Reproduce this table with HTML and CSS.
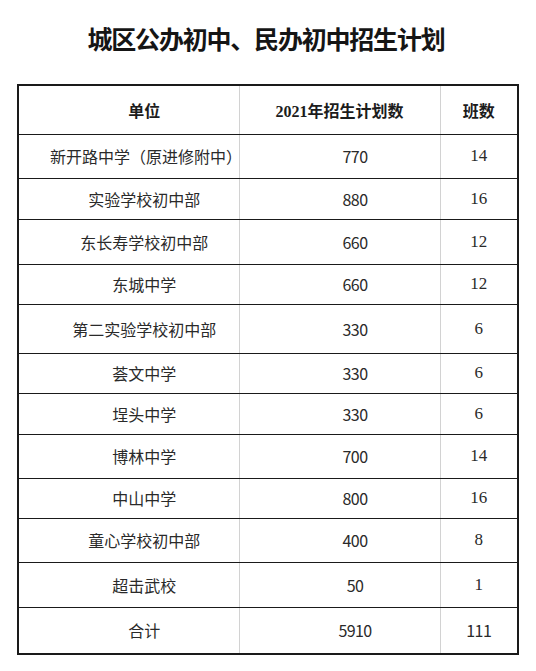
FILE: index.html
```html
<!DOCTYPE html>
<html lang="zh-CN">
<head>
<meta charset="utf-8">
<title>城区公办初中、民办初中招生计划</title>
<link rel="stylesheet" href="styles.css">
</head>
<body>
<div class="page">
  <h1 class="title">城区公办初中、民办初中招生计划</h1>
  <table class="plan">
    <colgroup>
      <col class="c-unit">
      <col class="c-num">
      <col class="c-cls">
    </colgroup>
    <thead>
      <tr class="h49">
        <th class="unit">单位</th>
        <th class="num-head">2021年招生计划数</th>
        <th class="cls">班数</th>
      </tr>
    </thead>
    <tbody>
      <tr class="h44"><td class="unit">新开路中学（原进修附中）</td><td class="num">770</td><td class="cls">14</td></tr>
      <tr class="h41"><td class="unit">实验学校初中部</td><td class="num">880</td><td class="cls">16</td></tr>
      <tr class="h45"><td class="unit">东长寿学校初中部</td><td class="num">660</td><td class="cls">12</td></tr>
      <tr class="h40"><td class="unit">东城中学</td><td class="num">660</td><td class="cls">12</td></tr>
      <tr class="h49"><td class="unit">第二实验学校初中部</td><td class="num">330</td><td class="cls">6</td></tr>
      <tr class="h40"><td class="unit">荟文中学</td><td class="num">330</td><td class="cls">6</td></tr>
      <tr class="h41"><td class="unit">埕头中学</td><td class="num">330</td><td class="cls">6</td></tr>
      <tr class="h44"><td class="unit">博林中学</td><td class="num">700</td><td class="cls">14</td></tr>
      <tr class="h40"><td class="unit">中山中学</td><td class="num">800</td><td class="cls">16</td></tr>
      <tr class="h44"><td class="unit">童心学校初中部</td><td class="num">400</td><td class="cls">8</td></tr>
      <tr class="h45"><td class="unit">超击武校</td><td class="num">50</td><td class="cls">1</td></tr>
      <tr class="h47"><td class="unit">合计</td><td class="num">5910</td><td class="cls total">111</td></tr>
    </tbody>
  </table>
</div>
</body>
</html>
```

FILE: styles.css
```css
html, body {
  margin: 0;
  padding: 0;
  background: #ffffff;
}

.page {
  width: 536px;
  min-height: 671px;
  background: #ffffff;
}

.title {
  margin: 0;
  height: 84px;
  box-sizing: border-box;
  padding-top: 25px;
  padding-right: 4px;
  font-family: "Noto Sans CJK SC", "Liberation Sans", sans-serif;
  font-weight: 700;
  font-size: 25px;
  line-height: 26px;
  letter-spacing: -1.2px;
  text-align: center;
  color: #151515;
}

.plan {
  margin-left: 17px;
  width: 500px;
  border-collapse: collapse;
  table-layout: fixed;
  border: 2px solid #1a1a1a;
}

.c-unit { width: 221px; }
.c-num { width: 201px; }
.c-cls { width: 78px; }

.plan th,
.plan td {
  padding: 0;
  text-align: center;
  vertical-align: middle;
  border-top: 1px solid #1a1a1a;
  border-bottom: 1px solid #1a1a1a;
  border-left: 1px solid #d2d2d2;
  border-right: 1px solid #d2d2d2;
  white-space: nowrap;
}

.plan th:first-child,
.plan td:first-child { border-left: 2px solid #1a1a1a; }

.plan th:last-child,
.plan td:last-child { border-right: 2px solid #1a1a1a; }

.plan th {
  font-family: "Liberation Serif", "Noto Sans CJK SC", serif;
  font-weight: 700;
  font-size: 16px;
  color: #1c1c1c;
}

.plan td {
  font-family: "Noto Sans CJK SC", "Liberation Sans", sans-serif;
  font-weight: 400;
  font-size: 16px;
  color: #2a2a2a;
}

.plan .unit { padding-left: 31px; }
.plan .num { padding-left: 31px; letter-spacing: -0.6px; }
.plan .num-head { padding-left: 0; }
.plan td.cls {
  font-family: "Liberation Serif", "Noto Sans CJK SC", serif;
  font-size: 17px;
}
.plan td.total {
  font-family: "Noto Sans CJK SC", "Liberation Sans", sans-serif;
  font-size: 16px;
  letter-spacing: -0.6px;
}

.h40 { height: 40px; }
.h41 { height: 41px; }
.h44 { height: 44px; }
.h45 { height: 45px; }
.h47 { height: 47px; }
.h49 { height: 49px; }
```
